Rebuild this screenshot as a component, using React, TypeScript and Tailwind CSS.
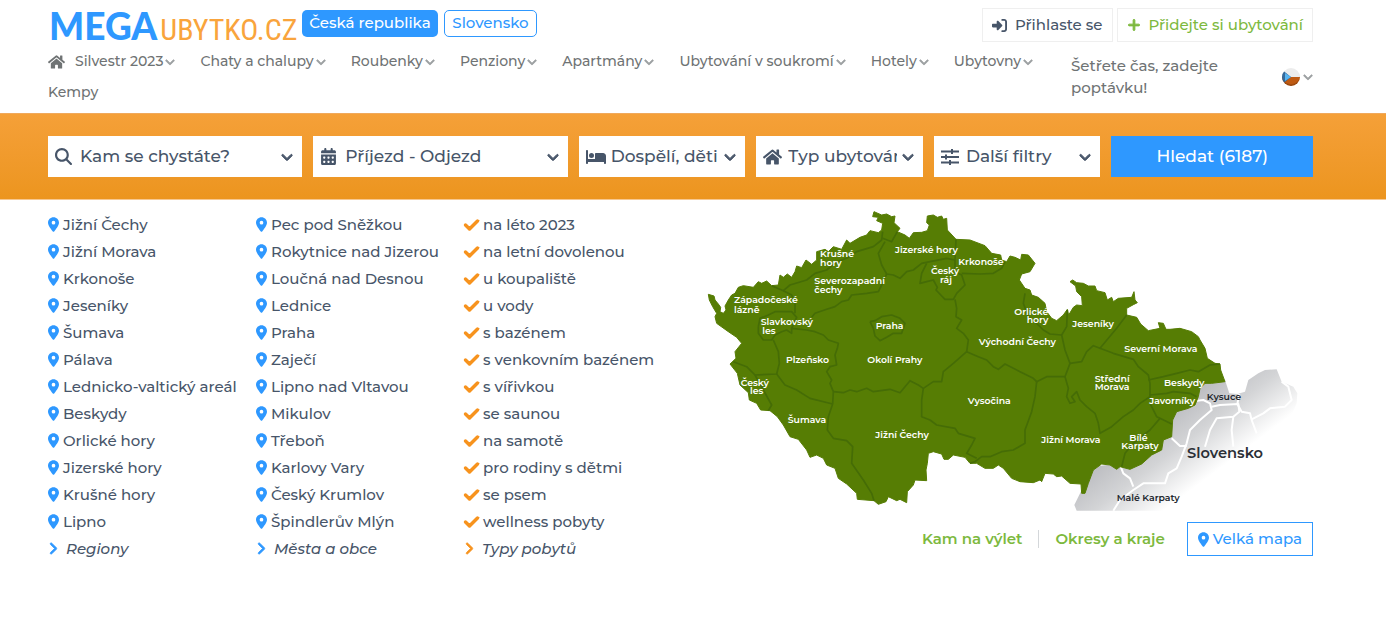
import React from 'react';
import {
  FaAngleDown,
  FaAngleRight,
  FaBed,
  FaCalendarDays,
  FaCheck,
  FaLocationDot,
  FaMagnifyingGlass,
  FaPlus,
  FaRightToBracket,
} from 'react-icons/fa6';
import { FaHome } from 'react-icons/fa';

const navItems = [
  'Silvestr 2023',
  'Chaty a chalupy',
  'Roubenky',
  'Penziony',
  'Apartmány',
  'Ubytování v soukromí',
  'Hotely',
  'Ubytovny',
];

const regions = [
  'Jižní Čechy', 'Jižní Morava', 'Krkonoše', 'Jeseníky', 'Šumava', 'Pálava',
  'Lednicko-valtický areál', 'Beskydy', 'Orlické hory', 'Jizerské hory', 'Krušné hory', 'Lipno',
];

const towns = [
  'Pec pod Sněžkou', 'Rokytnice nad Jizerou', 'Loučná nad Desnou', 'Lednice', 'Praha', 'Zaječí',
  'Lipno nad Vltavou', 'Mikulov', 'Třeboň', 'Karlovy Vary', 'Český Krumlov', 'Špindlerův Mlýn',
];

const stays = [
  'na léto 2023', 'na letní dovolenou', 'u koupaliště', 'u vody', 's bazénem', 's venkovním bazénem',
  's vířivkou', 'se saunou', 'na samotě', 'pro rodiny s dětmi', 'se psem', 'wellness pobyty',
];

const countryOutline =
  '25,283 42,288 45,300 55,312 62,322 60,335 70,340 78,330 75,318 85,300 95,285 105,280 115,262 130,257 160,262 175,245 185,250 200,243 215,257 235,255 240,225 250,232 262,222 275,232 285,215 290,198 305,203 318,180 335,193 350,180 350,155 375,148 385,155 400,140 425,148 440,120 450,130 480,112 500,105 510,92 535,98 545,90 548,70 530,62 535,52 518,50 522,35 545,45 560,42 575,50 585,48 582,68 600,85 592,95 615,105 628,115 640,98 665,97 682,92 688,75 680,68 682,48 700,45 ' +
  '712,52 725,48 730,58 740,55 742,90 768,118 810,120 855,137 875,160 902,165 905,180 920,185 930,168 945,172 962,180 965,163 985,165 1005,190 990,215 965,222 958,240 975,265 990,270 995,285 1015,292 1035,310 1040,335 1055,355 1070,362 1090,345 1102,328 1106,345 1120,322 1130,315 1147,317 1145,290 1130,275 1127,258 1110,245 1118,240 1130,248 1150,250 1165,258 1185,258 1190,272 1215,278 1222,300 1235,292 1240,305 1255,295 1295,292 1302,275 1305,300 1312,308 1300,314 1280,325 1280,345 1310,352 1322,372 1345,392 1365,388 1380,385 1375,368 1390,370 1398,388 1410,388 1440,385 1475,395 1495,410 ' +
  '1500,420 1515,445 1522,475 1545,490 1560,492 1562,510 1575,545 1535,550 1515,550 1500,565 1495,590 1485,615 1465,625 1430,635 1418,660 1415,710 1390,720 1385,750 1355,765 1325,792 1290,808 1260,800 1250,808 1230,795 1205,792 1180,810 1165,850 1155,880 1145,880 1143,852 1110,850 1085,828 1070,830 1060,822 1035,820 1025,845 1020,840 1000,848 960,845 935,835 910,805 895,795 880,805 855,805 830,790 810,790 ' +
  '795,772 760,765 745,778 732,778 725,762 700,755 685,760 682,790 678,810 680,842 645,840 640,855 622,875 620,908 600,898 590,902 565,890 558,905 535,913 522,902 472,898 470,880 440,852 415,835 405,805 380,795 370,775 350,765 330,772 320,750 295,718 270,710 250,675 232,650 210,632 182,630 170,610 148,600 145,578 120,555 112,520 90,492 108,475 105,455 125,430 110,412 85,395 50,370 45,350 50,340 38,320 28,300';

const borders = [
  '215,257 250,272 275,285 285,310 285,340',
  '250,272 270,255 320,240 345,220 380,210 410,185 440,175 470,155 520,140 545,120 548,95',
  '175,380 180,355 205,345 225,335 275,335 290,352 275,385 275,400 260,390 245,395 225,405 215,420 190,420 175,400 175,380',
  '335,352 345,340 380,328 405,320 425,305 445,300 455,285 500,280 535,275 550,245 560,222',
  '548,115 575,125 592,95',
  '555,125 535,160 545,195 560,222 580,225 600,235 620,215 640,210 665,190 690,185 740,175 765,180',
  '680,190 665,220 660,250 680,245 700,240 712,262 708,270 735,298 760,298 770,280 795,255 785,225 765,215 765,180 768,118',
  '785,220 840,222 880,220 905,205 915,185',
  '510,365 525,362 545,350 575,345 600,355 615,370 605,400 580,400 560,412 540,422 525,408 520,385 510,365',
  '220,420 235,455 238,490 230,522 165,525 140,500 100,485',
  '230,522 255,555 290,570 330,595 398,612',
  '275,385 320,390 345,395 370,405 385,420 415,430 412,445 405,465 410,495 390,500 380,515 395,540 390,550 400,575 398,612 385,650 382,690 400,715 440,722 458,740 455,790 490,840 515,880 522,902',
  '165,525 190,570 215,615 205,632',
  '400,575 430,578 450,570 470,575 500,565 520,575 570,568 600,578 630,542 655,555 670,565 700,545 725,545 730,515 760,490 800,455',
  '765,298 770,325 768,350 785,360 770,385 790,400 805,420 800,455',
  '800,455 835,470 860,480 880,500 895,508 915,492 960,515 1000,535 1010,545',
  '1010,545 1040,530 1095,530 1110,490 1095,450 1085,405 1100,380 1102,330',
  '1085,405 1050,402 1030,390 1010,370 985,350 970,310 975,280',
  '1010,545 1005,590 995,635 975,690 975,730 940,750 905,755 870,770 845,770 825,785 810,790',
  '670,565 665,600 665,650 690,660 710,675 765,685 775,700 825,715 815,735 800,760 830,775',
  '1110,490 1145,485 1160,455 1180,437 1200,445 1250,385 1280,345',
  '1200,445 1240,460 1300,478 1315,500 1345,525 1350,550 1350,590 1320,610 1300,630 1270,650 1235,680 1200,700 1195,670 1185,640 1160,620 1140,600 1130,575 1115,590 1125,605 1110,610 1100,590 1105,565 1095,530',
  '1345,540 1390,530 1430,520 1470,510 1495,515 1530,495 1560,492',
  '1350,585 1400,580 1420,575 1470,580 1490,590',
  '1350,610 1370,650 1380,655 1415,672',
  '1380,655 1350,690 1300,730 1275,760 1265,800',
];

const slovakBorders = [
  '1465,605 1510,600 1530,610 1535,630 1500,660 1470,690 1460,730 1445,770 1430,805 1405,820 1395,850 1330,850 1300,870 1260,900 1240,932',
  '1415,715 1440,738 1460,738',
  '1535,620 1560,615 1615,612 1618,635 1600,650 1550,655 1530,690 1515,740',
  '1618,582 1612,612 1625,635 1650,640 1655,660 1670,700',
  '1655,658 1690,640 1710,625 1755,620 1775,600 1765,560 1745,545',
  '1600,650 1595,690 1600,740',
  '1262,800 1270,820 1290,835 1300,860',
];

interface MapLabel {
  x: number;
  y: number;
  text: string;
}

const mapLabels: MapLabel[] = [
  { x: 360, y: 171, text: 'Krušné' },
  { x: 360, y: 198, text: 'hory' },
  { x: 343, y: 253, text: 'Severozapadní' },
  { x: 343, y: 280, text: 'čechy' },
  { x: 102, y: 310, text: 'Západočeské' },
  { x: 102, y: 338, text: 'lázně' },
  { x: 182, y: 376, text: 'Slavkovský' },
  { x: 187, y: 402, text: 'les' },
  { x: 527, y: 387, text: 'Praha' },
  { x: 502, y: 490, text: 'Okolí Prahy' },
  { x: 258, y: 488, text: 'Plzeňsko' },
  { x: 122, y: 557, text: 'Český' },
  { x: 150, y: 583, text: 'les' },
  { x: 263, y: 668, text: 'Šumava' },
  { x: 526, y: 713, text: 'Jižní Čechy' },
  { x: 585, y: 158, text: 'Jizerské hory' },
  { x: 775, y: 195, text: 'Krkonoše' },
  { x: 693, y: 223, text: 'Český' },
  { x: 720, y: 248, text: 'ráj' },
  { x: 943, y: 344, text: 'Orlické' },
  { x: 980, y: 369, text: 'hory' },
  { x: 836, y: 435, text: 'Východní Čechy' },
  { x: 1117, y: 382, text: 'Jeseníky' },
  { x: 1273, y: 457, text: 'Severní Morava' },
  { x: 1184, y: 545, text: 'Střední' },
  { x: 1184, y: 571, text: 'Morava' },
  { x: 1392, y: 557, text: 'Beskydy' },
  { x: 1348, y: 612, text: 'Javorníky' },
  { x: 803, y: 612, text: 'Vysočina' },
  { x: 1024, y: 730, text: 'Jižní Morava' },
  { x: 1288, y: 723, text: 'Bílé' },
  { x: 1264, y: 748, text: 'Karpaty' },
];

const RegionMap: React.FC = () => (
  <svg viewBox="0 0 1839 945" className="block w-full" role="img" aria-label="Mapa regionů">
    <defs>
      <linearGradient id="fade" gradientUnits="userSpaceOnUse" x1="810" y1="1080" x2="948" y2="1264">
        <stop offset="0" stopColor="#bcbdc1" />
        <stop offset="0.45" stopColor="#d3d4d6" />
        <stop offset="1" stopColor="#ffffff" />
      </linearGradient>
    </defs>
    <polygon
      fill="url(#fade)"
      points="1575,540 1588,580 1612,582 1635,575 1645,540 1675,520 1695,510 1730,508 1745,545 1780,560 1792,580 1790,610 1760,680 1600,800 1400,932 1130,932 1123,915 1145,870 1180,800 1260,790 1400,700 1420,630 1500,550"
    />
    <g fill="none" stroke="#fff" strokeWidth="6" strokeLinejoin="round">
      {slovakBorders.map((points) => (
        <polyline key={points} points={points} />
      ))}
    </g>
    <polygon points={countryOutline} fill="#567d04" stroke="#567d04" strokeWidth="3" strokeLinejoin="round" />
    <g fill="none" stroke="#456c06" strokeWidth="5" strokeLinejoin="round">
      {borders.map((points) => (
        <polyline key={points} points={points} />
      ))}
    </g>
    <g className="text-[28px] font-semibold" fill="#fff">
      {mapLabels.map((label) => (
        <text key={`${label.x}-${label.y}`} x={label.x} y={label.y}>
          {label.text}
        </text>
      ))}
    </g>
    <g className="text-[28px] font-semibold" fill="#23272e">
      <text x="1520" y="601">Kysuce</text>
      <text x="1250" y="902">Malé Karpaty</text>
    </g>
    <text x="1461" y="774" className="text-[44px] font-semibold" fill="#2b2f36">Slovensko</text>
  </svg>
);

const FiltersIcon: React.FC = () => (
  <svg viewBox="0 0 18 16" className="h-4 w-[18px]" fill="none" stroke="currentColor" strokeWidth="2">
    <path d="M0 2.5h18M0 8h18M0 13.5h18M11 0v5M5 5.5v5M9 11v5" />
  </svg>
);

const CzechFlag: React.FC = () => (
  <svg viewBox="0 0 20 20" className="h-5 w-5">
    <defs>
      <clipPath id="flag">
        <circle cx="10" cy="10" r="9" />
      </clipPath>
      <radialGradient id="gloss" cx="0.5" cy="0.4" r="0.62">
        <stop offset="0.75" stopColor="#000" stopOpacity="0" />
        <stop offset="1" stopColor="#000" stopOpacity="0.4" />
      </radialGradient>
    </defs>
    <g clipPath="url(#flag)">
      <path fill="#ececec" d="M0 0h20v10H0z" />
      <path fill="#bf5a12" d="M0 10h20v10H0z" />
      <path fill="#356a9c" d="M0 2l10 8L0 18z" />
      <path fill="#58b4f0" d="M4 6l6 4-6 4z" />
      <circle cx="10" cy="10" r="9" fill="url(#gloss)" />
    </g>
  </svg>
);

const NavChevron: React.FC = () => (
  <FaAngleDown className="h-3 w-[10px] overflow-visible stroke-[35px] text-[#9ca0a2]" />
);

interface SearchFieldProps {
  id: string;
  label: string;
  icon: React.ReactNode;
}

const SearchField: React.FC<SearchFieldProps> = ({ id, label, icon }) => (
  <div className="relative h-[41px] bg-white text-[#475569]">
    <label htmlFor={id} aria-label={label} className="pointer-events-none absolute inset-y-0 left-[7px] flex items-center">
      {icon}
    </label>
    <select
      id={id}
      className="h-full w-full appearance-none bg-transparent pr-[26px] pl-8 text-[17px] font-medium outline-none"
    >
      <option>{label}</option>
    </select>
    <FaAngleDown className="pointer-events-none absolute top-[14px] right-2 h-[14px] w-[14px] overflow-visible stroke-[35px]" />
  </div>
);

interface LinkColumnProps {
  items: string[];
  more: string;
  check?: boolean;
}

const LinkColumn: React.FC<LinkColumnProps> = ({ items, more, check }) => (
  <ul className="w-[208px] shrink-0 whitespace-nowrap">
    {items.map((item) => (
      <li key={item} className="leading-[27px]">
        <a href="#" className="flex items-center gap-1">
          {check ? (
            <FaCheck className="h-4 w-[15px] overflow-visible stroke-[45px] text-[#f7931e]" />
          ) : (
            <FaLocationDot className="h-[15px] w-[11px] text-[#2e98ff]" />
          )}
          {item}
        </a>
      </li>
    ))}
    <li className="leading-[27px]">
      <a href="#" className="flex items-center gap-2 italic">
        <FaAngleRight
          className={`h-[15px] w-[10px] overflow-visible stroke-[25px] ${check ? 'text-[#f7931e]' : 'text-[#2e98ff]'}`}
        />
        {more}
      </a>
    </li>
  </ul>
);

export default function App() {
  return (
    <div className="min-h-screen bg-white font-['Montserrat','Inter',sans-serif] text-[15px] font-medium text-[#475569]">
      <header className="pr-[73px] pl-12">
        <div className="flex items-start justify-between">
          <div className="flex items-start">
            <a href="#" className="flex h-[46px] w-[254px] items-baseline gap-[3px] pl-px leading-[52px] whitespace-nowrap">
              <span className="font-['Lato',sans-serif] text-[37px] font-black text-[#2e98ff]">MEGA</span>
              <span className="font-['Roboto_Condensed','Liberation_Sans_Narrow','Lato',sans-serif] text-[30px] font-normal text-[#f9a43c]">
                UBYTKO.CZ
              </span>
            </a>
            <div className="flex gap-[6px] pt-[10px] whitespace-nowrap">
              <a href="#" className="flex h-[27px] w-[136px] items-center justify-center rounded-[5px] bg-[#2e98ff] text-white">
                Česká republika
              </a>
              <a href="#" className="flex h-[27px] w-[93px] items-center justify-center rounded-[5px] border border-[#2e98ff] text-[#2e98ff]">
                Slovensko
              </a>
            </div>
          </div>
          <div className="flex gap-1 pt-2 whitespace-nowrap">
            <button className="flex h-[34px] items-center gap-2 border border-[#efefef] px-[9px]">
              <FaRightToBracket className="h-[15px] w-[15px]" />
              Přihlaste se
            </button>
            <button className="flex h-[34px] items-center gap-2 border border-[#efefef] px-[9px] text-[#7db93e]">
              <FaPlus className="h-[14px] w-[14px] overflow-visible stroke-[35px]" />
              Přidejte si ubytování
            </button>
          </div>
        </div>

        <div className="flex pb-[5px] text-[#6f7374]">
          <nav className="flex flex-1 flex-wrap gap-x-[25px] text-[14px] leading-[31px] whitespace-nowrap">
            {navItems.map((item, i) => (
              <a key={item} href="#" className="flex items-center gap-[2px]">
                {i === 0 && <FaHome className="mr-2 h-4 w-[17px]" />}
                {item}
                <NavChevron />
              </a>
            ))}
            <a href="#">Kempy</a>
          </nav>
          <div className="flex w-[242px] items-start justify-between pt-[9px]">
            <a href="#" className="w-[160px] leading-[22px]">
              Šetřete čas, zadejte poptávku!
            </a>
            <button className="flex h-[44px] items-center gap-[2px]" aria-label="Jazyk">
              <CzechFlag />
              <NavChevron />
            </button>
          </div>
        </div>
      </header>

      <form className="grid h-[87px] grid-cols-[255fr_255fr_167fr_167fr_167fr_202fr] items-center gap-[11px] border-t border-b border-t-[#f0a95c] border-b-[#f7c890] bg-linear-to-b from-[#f5a038] to-[#ec951e] pr-[73px] pl-12">
        <SearchField id="where" label="Kam se chystáte?" icon={<FaMagnifyingGlass className="h-[17px] w-[17px]" />} />
        <SearchField id="when" label="Příjezd - Odjezd" icon={<FaCalendarDays className="h-[17px] w-[17px]" />} />
        <SearchField id="who" label="Dospělí, děti" icon={<FaBed className="h-[18px] w-5" />} />
        <SearchField id="type" label="Typ ubytování" icon={<FaHome className="h-[18px] w-[19px]" />} />
        <SearchField id="filters" label="Další filtry" icon={<FiltersIcon />} />
        <button type="button" className="h-[41px] bg-[#2e98ff] text-[17px] text-white">
          Hledat (6187)
        </button>
      </form>

      <main className="flex items-start pr-[73px] pl-12">
        <div className="flex w-[652px] shrink-0 pt-[11px]">
          <LinkColumn items={regions} more="Regiony" />
          <LinkColumn items={towns} more="Města a obce" />
          <LinkColumn items={stays} more="Typy pobytů" check />
        </div>
        <div className="min-w-0 flex-1">
          <RegionMap />
          <div className="mt-[7px] flex items-center justify-end font-semibold whitespace-nowrap text-[#7db93e]">
            <a href="#">Kam na výlet</a>
            <span className="mx-4 h-[18px] w-px bg-[#d4d7da]" />
            <a href="#">Okresy a kraje</a>
            <a href="#" className="ml-[22px] flex h-[34px] items-center gap-1 border border-[#2e98ff] px-[10px] font-medium text-[#2e98ff]">
              <FaLocationDot className="h-[15px] w-[11px]" />
              Velká mapa
            </a>
          </div>
        </div>
      </main>
    </div>
  );
}
